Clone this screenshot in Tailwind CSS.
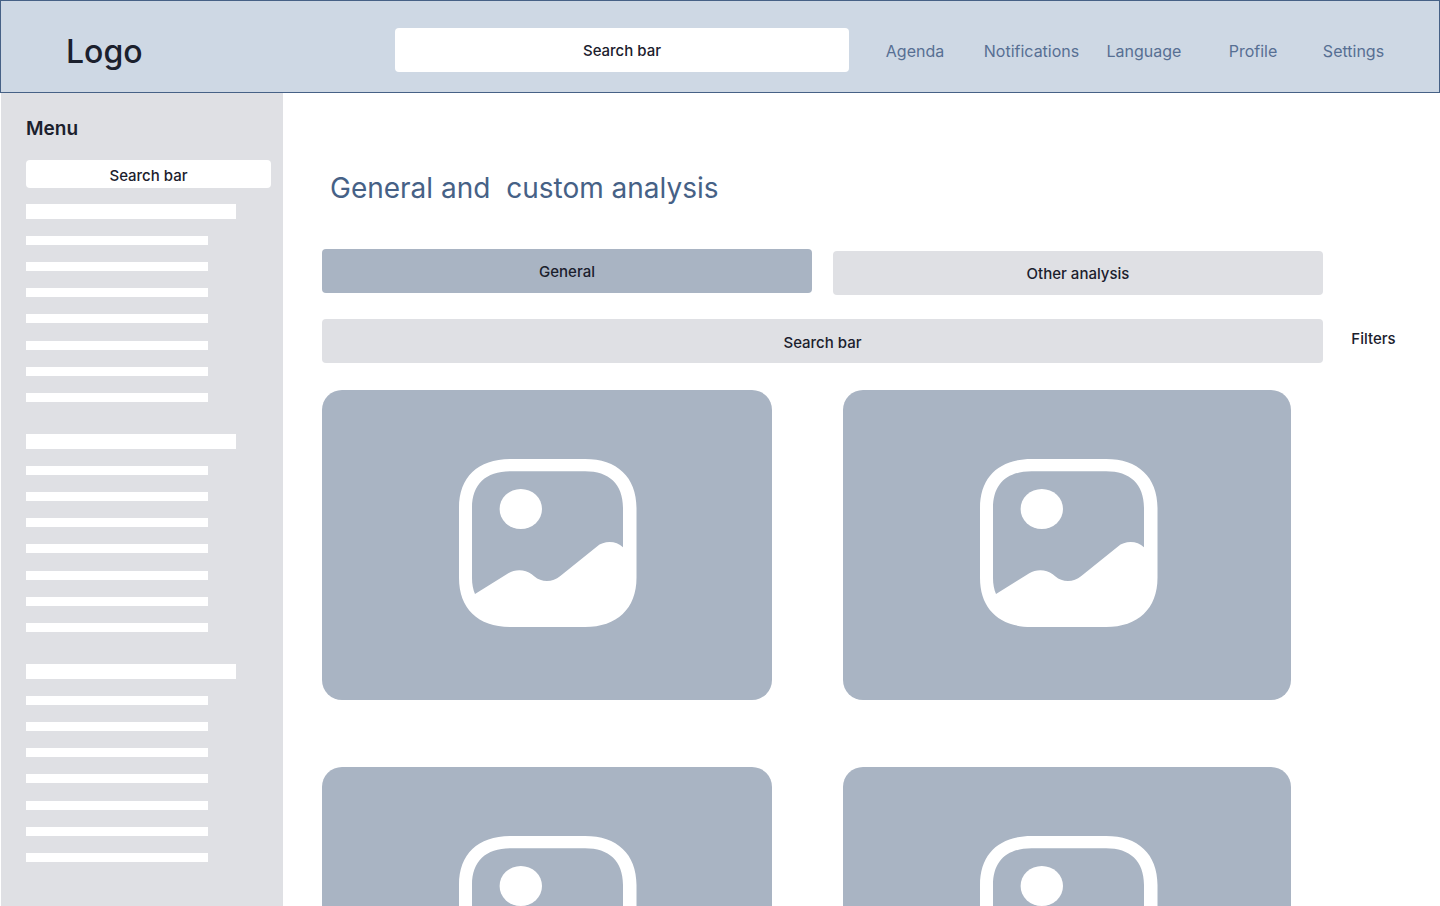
<!DOCTYPE html>
<html lang="en">
<head>
<meta charset="utf-8">
<meta name="viewport" content="width=device-width, initial-scale=1">
<title>General and custom analysis</title>
<script src="https://cdn.jsdelivr.net/npm/@tailwindcss/browser@4"></script>
</head>
<body class="flex h-screen flex-col overflow-hidden bg-white font-['Inter',sans-serif] text-[15px] font-medium text-[#1b202d]">
<svg class="hidden" aria-hidden="true">
  <symbol id="picture" viewBox="0 0 178 168">
    <path fill="currentColor" fill-rule="evenodd" d="M51.5 0H126C158 0 177.5 18 177.5 49V119C177.5 149.5 158 168 126 168H51.5C19 168 0 149.5 0 119V49C0 18 19 0 51.5 0ZM51.5 12.3C27 12.3 13 25 13 49V119C13 125 14 130.500 16 135L49.300 114.300C56 110 66 110 72.700 115.300L75.500 117.500C82 123.500 94 123.500 101 117.300L137.700 87.700C145 81.500 157 81.500 164 88.300V49C164 25 150 12.300 126 12.300Z"/>
    <ellipse fill="currentColor" cx="61.800" cy="50" rx="21.200" ry="20"/>
  </symbol>
</svg>

<header class="flex h-[93px] shrink-0 items-center border border-[#466186] bg-[#ced8e4] pt-1.5 pr-10">
  <a href="#" class="w-[394px] shrink-0 pt-1 pl-[65px] text-[32px] leading-10">Logo</a>
  <input type="text" aria-label="Search" placeholder="Search bar" class="h-11 w-[454px] rounded bg-white pt-0.5 text-center outline-none placeholder:text-[#1b202d] placeholder:opacity-100">
  <nav aria-label="Main" class="ml-2 grid flex-1 grid-cols-[116fr_117fr_108fr_110fr_91fr] pt-0.5 text-center text-base font-normal text-[#576f93]">
    <a href="#">Agenda</a>
    <a href="#">Notifications</a>
    <a href="#">Language</a>
    <a href="#">Profile</a>
    <a href="#">Settings</a>
  </nav>
</header>

<div class="flex min-h-0 flex-1">
  <aside class="ml-px w-[282px] shrink-0 overflow-hidden bg-[#dfe0e4] pt-5 pr-3 pl-[25px]">
    <h2 class="text-[19px] leading-8 font-semibold">Menu</h2>
    <input type="text" aria-label="Search menu" placeholder="Search bar" class="mt-[15px] mb-4 block h-7 w-full rounded bg-white pt-0.5 text-center outline-none placeholder:text-[#1b202d] placeholder:opacity-100">
    <div class="flex flex-col gap-8">
      <section>
        <div class="h-[15px] w-[210px] bg-white"></div>
        <ul class="mt-[17px] flex h-[166px] w-[182px] flex-col justify-between">
          <li class="h-[9px] bg-white"></li><li class="h-[9px] bg-white"></li><li class="h-[9px] bg-white"></li><li class="h-[9px] bg-white"></li><li class="h-[9px] bg-white"></li><li class="h-[9px] bg-white"></li><li class="h-[9px] bg-white"></li>
        </ul>
      </section>
      <section>
        <div class="h-[15px] w-[210px] bg-white"></div>
        <ul class="mt-[17px] flex h-[166px] w-[182px] flex-col justify-between">
          <li class="h-[9px] bg-white"></li><li class="h-[9px] bg-white"></li><li class="h-[9px] bg-white"></li><li class="h-[9px] bg-white"></li><li class="h-[9px] bg-white"></li><li class="h-[9px] bg-white"></li><li class="h-[9px] bg-white"></li>
        </ul>
      </section>
      <section>
        <div class="h-[15px] w-[210px] bg-white"></div>
        <ul class="mt-[17px] flex h-[166px] w-[182px] flex-col justify-between">
          <li class="h-[9px] bg-white"></li><li class="h-[9px] bg-white"></li><li class="h-[9px] bg-white"></li><li class="h-[9px] bg-white"></li><li class="h-[9px] bg-white"></li><li class="h-[9px] bg-white"></li><li class="h-[9px] bg-white"></li>
        </ul>
      </section>
    </div>
  </aside>

  <main class="min-w-0 flex-1 overflow-hidden pt-[75px] pl-[39px]">
    <h1 class="pl-2 text-[28px] leading-10 font-normal text-[#466186]">General and&nbsp; custom analysis</h1>
    <div class="mt-[41px] mr-[117px] flex items-start gap-[21px]">
      <button class="h-11 flex-1 rounded bg-[#a9b4c3] pt-0.5">General</button>
      <button class="mt-0.5 h-11 flex-1 rounded bg-[#dfe0e4] pt-0.5">Other analysis</button>
    </div>
    <div class="mt-6 flex items-start">
      <input type="text" aria-label="Search analyses" placeholder="Search bar" class="h-11 min-w-0 flex-1 rounded bg-[#dfe0e4] pt-0.5 text-center outline-none placeholder:text-[#1b202d] placeholder:opacity-100">
      <button class="h-[38px] w-[117px] pt-0.5 pr-4">Filters</button>
    </div>
    <div class="mt-[27px] mr-[149px] grid grid-cols-[450fr_448fr] gap-x-[71px] gap-y-[67px] text-white">
      <div class="flex h-[310px] justify-center rounded-[20px] bg-[#a9b4c3] pt-[69px] pl-0.5"><svg class="h-[168px] w-[178px]" role="img" aria-label="Image placeholder"><use href="#picture"/></svg></div>
      <div class="flex h-[310px] justify-center rounded-[20px] bg-[#a9b4c3] pt-[69px] pl-1"><svg class="h-[168px] w-[178px]" role="img" aria-label="Image placeholder"><use href="#picture"/></svg></div>
      <div class="flex h-[310px] justify-center rounded-[20px] bg-[#a9b4c3] pt-[69px] pl-0.5"><svg class="h-[168px] w-[178px]" role="img" aria-label="Image placeholder"><use href="#picture"/></svg></div>
      <div class="flex h-[310px] justify-center rounded-[20px] bg-[#a9b4c3] pt-[69px] pl-1"><svg class="h-[168px] w-[178px]" role="img" aria-label="Image placeholder"><use href="#picture"/></svg></div>
    </div>
  </main>
</div>
</body>
</html>
